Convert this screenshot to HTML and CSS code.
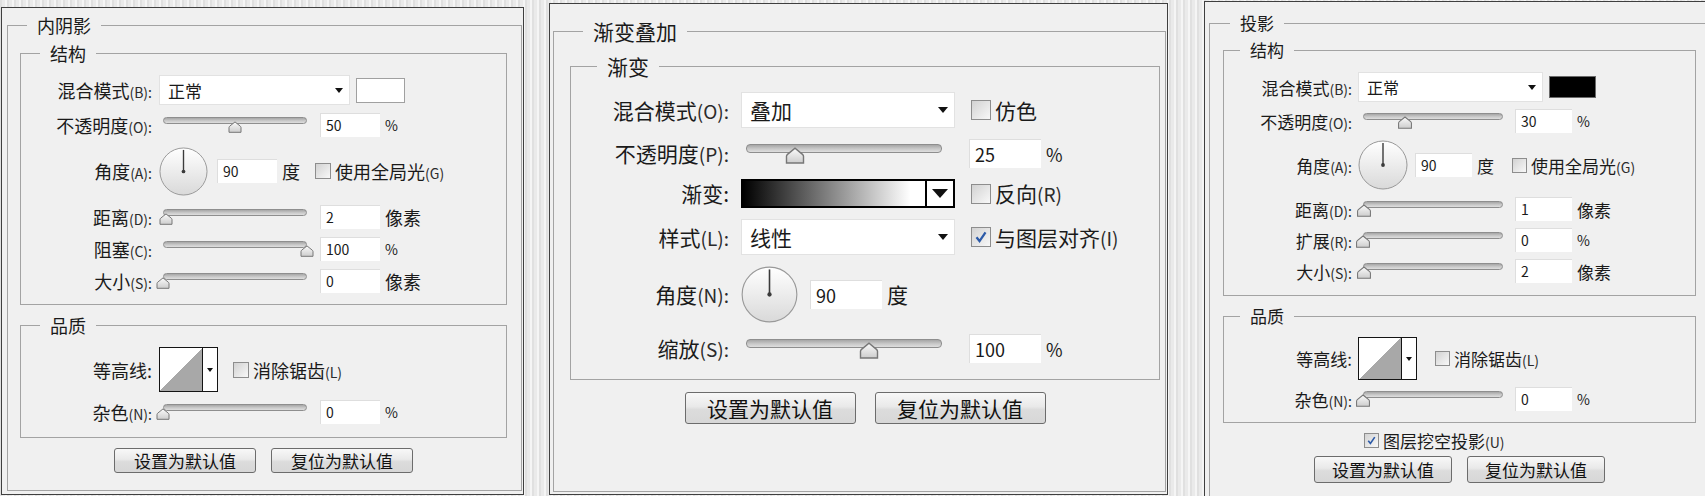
FILE: index.html
```html
<!DOCTYPE html>
<html lang="zh-CN">

<head>
    <meta charset="UTF-8">
    <title>图层样式</title>
    <link rel="stylesheet" href="styles.css">
</head>

<body>
    <!-- shared shapes -->
    <svg class="defs" aria-hidden="true">
        <defs>
            <linearGradient id="tg" x1="0" y1="0" x2="0" y2="1">
                <stop offset="0" stop-color="#fbfbfb" />
                <stop offset="1" stop-color="#cdcdcd" />
            </linearGradient>
            <linearGradient id="dg" x1="0" y1="0" x2="0" y2="1">
                <stop offset="0" stop-color="#ffffff" />
                <stop offset="1" stop-color="#d9d9d9" />
            </linearGradient>
            <symbol id="thumb" viewBox="0 0 14 12">
                <path d="M1 11.3V6.6Q1 5.8 1.7 5.2L7 .9l5.3 4.3q.7.6.7 1.4v4.7z" fill="url(#tg)" stroke="#777" />
            </symbol>
            <symbol id="dial" viewBox="0 0 50 50">
                <circle cx="25" cy="25" r="24" fill="url(#dg)" stroke="#999" />
                <path d="M25 25V3" stroke="#3b3b3b" stroke-width="1.4" />
                <circle cx="25" cy="25" r="1.9" fill="#3b3b3b" />
            </symbol>
            <symbol id="tick" viewBox="0 0 16 16">
                <path d="M4 8.2l2.7 3.4L12 3.8" fill="none" stroke="#2c5aa8" stroke-width="2" />
            </symbol>
        </defs>
    </svg>

    <!-- 内阴影 -->
    <div class="panel p1">
        <fieldset class="box outer">
            <legend>内阴影</legend>
            <fieldset class="box sub s1">
                <legend>结构</legend>
                <div class="row">
                    <span class="lbl">混合模式<span class="k">(B):</span></span>
                    <div class="select"><span>正常</span><i class="arrow"></i></div>
                    <span class="swatch"></span>
                </div>
                <div class="row">
                    <span class="lbl">不透明度<span class="k">(O):</span></span>
                    <div class="slider"><div class="track"></div><svg class="thumb" style="left:50%"><use href="#thumb" /></svg></div>
                    <span class="num">50</span><span class="unit">%</span>
                </div>
                <div class="row ang">
                    <span class="lbl">角度<span class="k">(A):</span></span>
                    <svg class="dial"><use href="#dial" /></svg>
                    <span class="num anum">90</span><span class="unit cj">度</span>
                    <span class="cb"></span><span class="cbl">使用全局光<span class="k">(G)</span></span>
                </div>
                <div class="row">
                    <span class="lbl">距离<span class="k">(D):</span></span>
                    <div class="slider"><div class="track"></div><svg class="thumb" style="left:2%"><use href="#thumb" /></svg></div>
                    <span class="num">2</span><span class="unit cj">像素</span>
                </div>
                <div class="row">
                    <span class="lbl">阻塞<span class="k">(C):</span></span>
                    <div class="slider"><div class="track"></div><svg class="thumb" style="left:100%"><use href="#thumb" /></svg></div>
                    <span class="num">100</span><span class="unit">%</span>
                </div>
                <div class="row">
                    <span class="lbl">大小<span class="k">(S):</span></span>
                    <div class="slider"><div class="track"></div><svg class="thumb" style="left:0%"><use href="#thumb" /></svg></div>
                    <span class="num">0</span><span class="unit cj">像素</span>
                </div>
            </fieldset>
            <fieldset class="box sub s2">
                <legend>品质</legend>
                <div class="row">
                    <span class="lbl">等高线:</span>
                    <div class="contour"><div class="curve"></div><div class="cdd"><i class="arrow"></i></div></div>
                    <span class="cb"></span><span class="cbl">消除锯齿<span class="k">(L)</span></span>
                </div>
                <div class="row">
                    <span class="lbl">杂色<span class="k">(N):</span></span>
                    <div class="slider"><div class="track"></div><svg class="thumb" style="left:0%"><use href="#thumb" /></svg></div>
                    <span class="num">0</span><span class="unit">%</span>
                </div>
            </fieldset>
            <div class="btns">
                <button class="btn">设置为默认值</button>
                <button class="btn">复位为默认值</button>
            </div>
        </fieldset>
    </div>

    <!-- 渐变叠加 -->
    <div class="panel p2">
        <fieldset class="box outer">
            <legend>渐变叠加</legend>
            <fieldset class="box sub s1">
                <legend>渐变</legend>
                <div class="row">
                    <span class="lbl">混合模式<span class="k">(O):</span></span>
                    <div class="select"><span>叠加</span><i class="arrow"></i></div>
                    <span class="cb"></span><span class="cbl">仿色</span>
                </div>
                <div class="row">
                    <span class="lbl">不透明度<span class="k">(P):</span></span>
                    <div class="slider"><div class="track"></div><svg class="thumb" style="left:25%"><use href="#thumb" /></svg></div>
                    <span class="num">25</span><span class="unit">%</span>
                </div>
                <div class="row">
                    <span class="lbl">渐变:</span>
                    <div class="grad"><div class="ramp"></div><div class="gdd"><i class="arrow"></i></div></div>
                    <span class="cb"></span><span class="cbl">反向<span class="k">(R)</span></span>
                </div>
                <div class="row">
                    <span class="lbl">样式<span class="k">(L):</span></span>
                    <div class="select"><span>线性</span><i class="arrow"></i></div>
                    <span class="cb"><svg><use href="#tick" /></svg></span><span class="cbl">与图层对齐<span class="k">(I)</span></span>
                </div>
                <div class="row ang">
                    <span class="lbl">角度<span class="k">(N):</span></span>
                    <svg class="dial"><use href="#dial" /></svg>
                    <span class="num anum">90</span><span class="unit cj">度</span>
                </div>
                <div class="row">
                    <span class="lbl">缩放<span class="k">(S):</span></span>
                    <div class="slider"><div class="track"></div><svg class="thumb" style="left:63%"><use href="#thumb" /></svg></div>
                    <span class="num">100</span><span class="unit">%</span>
                </div>
            </fieldset>
            <div class="btns">
                <button class="btn">设置为默认值</button>
                <button class="btn">复位为默认值</button>
            </div>
        </fieldset>
    </div>

    <!-- 投影 -->
    <div class="panel p3">
        <fieldset class="box outer">
            <legend>投影</legend>
            <fieldset class="box sub s1">
                <legend>结构</legend>
                <div class="row">
                    <span class="lbl">混合模式<span class="k">(B):</span></span>
                    <div class="select"><span>正常</span><i class="arrow"></i></div>
                    <span class="swatch black"></span>
                </div>
                <div class="row">
                    <span class="lbl">不透明度<span class="k">(O):</span></span>
                    <div class="slider"><div class="track"></div><svg class="thumb" style="left:30%"><use href="#thumb" /></svg></div>
                    <span class="num">30</span><span class="unit">%</span>
                </div>
                <div class="row ang">
                    <span class="lbl">角度<span class="k">(A):</span></span>
                    <svg class="dial"><use href="#dial" /></svg>
                    <span class="num anum">90</span><span class="unit cj">度</span>
                    <span class="cb"></span><span class="cbl">使用全局光<span class="k">(G)</span></span>
                </div>
                <div class="row">
                    <span class="lbl">距离<span class="k">(D):</span></span>
                    <div class="slider"><div class="track"></div><svg class="thumb" style="left:1%"><use href="#thumb" /></svg></div>
                    <span class="num">1</span><span class="unit cj">像素</span>
                </div>
                <div class="row">
                    <span class="lbl">扩展<span class="k">(R):</span></span>
                    <div class="slider"><div class="track"></div><svg class="thumb" style="left:0%"><use href="#thumb" /></svg></div>
                    <span class="num">0</span><span class="unit">%</span>
                </div>
                <div class="row">
                    <span class="lbl">大小<span class="k">(S):</span></span>
                    <div class="slider"><div class="track"></div><svg class="thumb" style="left:1%"><use href="#thumb" /></svg></div>
                    <span class="num">2</span><span class="unit cj">像素</span>
                </div>
            </fieldset>
            <fieldset class="box sub s2">
                <legend>品质</legend>
                <div class="row">
                    <span class="lbl">等高线:</span>
                    <div class="contour"><div class="curve"></div><div class="cdd"><i class="arrow"></i></div></div>
                    <span class="cb"></span><span class="cbl">消除锯齿<span class="k">(L)</span></span>
                </div>
                <div class="row">
                    <span class="lbl">杂色<span class="k">(N):</span></span>
                    <div class="slider"><div class="track"></div><svg class="thumb" style="left:0%"><use href="#thumb" /></svg></div>
                    <span class="num">0</span><span class="unit">%</span>
                </div>
            </fieldset>
            <div class="row knock">
                <span class="cb"><svg><use href="#tick" /></svg></span><span class="cbl">图层挖空投影<span class="k">(U)</span></span>
            </div>
            <div class="btns">
                <button class="btn">设置为默认值</button>
                <button class="btn">复位为默认值</button>
            </div>
        </fieldset>
    </div>
</body>

</html>
```

FILE: styles.css
```css
* {
    box-sizing: border-box;
}

html,
body {
    height: 100%;
}

body {
    margin: 0;
    overflow: hidden;
    display: flex;
    align-items: flex-start;
    font-family: "Noto Sans CJK SC", "Noto Sans", sans-serif;
    color: #1a1a1a;
    background: repeating-linear-gradient(90deg, #e0e0e0 0 2px, #eaeaea 2px 5px, #f5f5f5 5px 7px);
}

.defs {
    position: absolute;
    width: 0;
    height: 0;
}

/* panels */

.panel {
    flex-shrink: 0;
    display: flex;
    flex-direction: column;
    background: #f0f0f0;
    border: 1px solid #3f3f3f;
    font-size: var(--fs);
    line-height: 1;
}

.p1 {
    width: 523px;
    height: 488px;
    margin: 7px 0 0 1px;
    --fs: 18px;
    --ks: 14px;
    --lh: 20px;
    --lw: 131px;
    --gap: 7px;
    --sw: 191px;
    --sh: 30px;
    --sfs: 17px;
    --tml: 11px;
    --tw: 144px;
    --th: 7px;
    --thw: 15px;
    --thh: 12px;
    --tht: 4px;
    --nml: 13px;
    --nw: 60px;
    --nh: 24px;
    --nfs: 14px;
    --uml: 5px;
    --dial: 49px;
    --angh: 52px;
    --anml: 9px;
    --cbs: 16px;
    --cbml: 15px;
    --rg: 8px;
    --cw: 59px;
    --ch: 45px;
    --bw: 142px;
    --bh: 25px;
    --bfs: 17px;
    --bgap: 15px;
}

.p2 {
    width: 619px;
    height: 492px;
    margin: 3px 0 0 25px;
    --fs: 21px;
    --ks: 19px;
    --lh: 24px;
    --lw: 158px;
    --gap: 12px;
    --sw: 214px;
    --sh: 36px;
    --sfs: 21px;
    --tml: 17px;
    --tw: 196px;
    --th: 9px;
    --thw: 20px;
    --thh: 17px;
    --tht: 3px;
    --nml: 27px;
    --nw: 72px;
    --nh: 29px;
    --nfs: 18px;
    --uml: 5px;
    --dial: 57px;
    --angh: 57px;
    --anml: 12px;
    --cbs: 20px;
    --cbml: 16px;
    --rg: 11px;
    --bw: 171px;
    --bh: 32px;
    --bfs: 21px;
    --bgap: 19px;
}

.p3 {
    width: 520px;
    height: 520px;
    margin: 1px 0 0 36px;
    --fs: 17px;
    --ks: 14px;
    --lh: 20px;
    --lw: 128px;
    --gap: 6px;
    --sw: 185px;
    --sh: 30px;
    --sfs: 16px;
    --tml: 11px;
    --tw: 140px;
    --th: 7px;
    --thw: 15px;
    --thh: 13px;
    --tht: 3px;
    --nml: 12px;
    --nw: 57px;
    --nh: 24px;
    --nfs: 14px;
    --uml: 5px;
    --dial: 50px;
    --angh: 50px;
    --anml: 7px;
    --cbs: 15px;
    --cbml: 18px;
    --rg: 7px;
    --cw: 59px;
    --ch: 43px;
    --bw: 138px;
    --bh: 27px;
    --bfs: 17px;
    --bgap: 15px;
}

/* group boxes */

.box {
    margin: 0;
    padding: 0;
    min-width: 0;
    border: 1px solid #a3a3a3;
}

.box > legend {
    padding: 0 10px;
    font-size: var(--fs);
    line-height: var(--lh);
}

.outer {
    flex: 1;
    display: flex;
    flex-direction: column;
}

.sub {
    display: flex;
    flex-direction: column;
    gap: var(--rg);
}

.p1 .outer {
    margin: 7px 1px 3px 5px;
}

.p1 .outer > legend {
    margin-left: 19px;
}

.p1 .sub > legend {
    margin-left: 19px;
}

.p1 .s1 {
    margin: 8px 14px 0 12px;
    padding: 12px 0 11px;
}

.p1 .s2 {
    margin: 10px 14px 0 12px;
    padding: 12px 0 13px;
}

.p1 .btns {
    margin: 10px 14px 0 12px;
}

.p2 .outer {
    margin: 15px 1px 2px 3px;
}

.p2 .outer > legend {
    margin-left: 29px;
}

.p2 .sub > legend {
    margin-left: 26px;
}

.p2 .s1 {
    margin: 11px 5px 0 16px;
    padding: 14px 0 16px;
}

.p2 .btns {
    margin: 12px 5px 0 16px;
}

.p3 .outer {
    margin: 11px 0 0 4px;
}

.p3 .outer > legend {
    margin-left: 20px;
}

.p3 .sub {
    width: 473px;
    margin-left: 13px;
}

.p3 .sub > legend {
    margin-left: 16px;
}

.p3 .s1 {
    margin-top: 7px;
    padding: 12px 0;
}

.p3 .s2 {
    margin-top: 10px;
    padding: 11px 0;
}

.p3 .knock {
    min-height: 18px;
    margin: 8px 0 0 154px;
}

.p3 .knock .cb {
    margin-left: 0;
}

.p3 .btns {
    width: 473px;
    margin: 7px 0 0 13px;
}

/* rows */

.row {
    display: flex;
    align-items: center;
    min-height: var(--nh);
    white-space: nowrap;
}

.row.ang {
    min-height: var(--angh);
}

.lbl {
    flex-shrink: 0;
    width: var(--lw);
    text-align: right;
}

.k {
    font-size: var(--ks);
    color: #2b2b2b;
}

.select {
    display: flex;
    align-items: center;
    flex-shrink: 0;
    width: var(--sw);
    height: var(--sh);
    margin-left: var(--gap);
    padding: 0 7px 0 9px;
    background: #fff;
    box-shadow: inset 0 0 0 1px #e2e2e2;
    font-size: var(--sfs);
}

.arrow {
    margin-left: auto;
    border-left: 4px solid transparent;
    border-right: 4px solid transparent;
    border-top: 5px solid #111;
}

.p2 .arrow {
    border-width: 6px 5px 0;
}

.swatch {
    width: 49px;
    height: 25px;
    margin-left: 6px;
    border: 1px solid #a0a0a0;
    background: #fff;
}

.swatch.black {
    width: 47px;
    height: 22px;
    border-color: #6a6a6a;
    background: #000;
}

.slider {
    position: relative;
    flex-shrink: 0;
    width: var(--tw);
    height: calc(var(--tht) + var(--thh));
    margin-left: var(--tml);
}

.track {
    height: var(--th);
    border: 1px solid #8e8e8e;
    border-radius: 4px;
    background: linear-gradient(#a6a6a6, #c9c9c9 55%, #dedede);
}

.thumb {
    position: absolute;
    top: var(--tht);
    width: var(--thw);
    height: var(--thh);
    transform: translateX(-50%);
}

.num {
    display: flex;
    align-items: center;
    flex-shrink: 0;
    width: var(--nw);
    height: var(--nh);
    margin-left: var(--nml);
    padding-left: 6px;
    background: #fff;
    box-shadow: inset 1px 1px 0 #dedede;
    font-size: var(--nfs);
}

.num.anum {
    margin-left: var(--anml);
}

.unit {
    margin-left: var(--uml);
    font-size: var(--nfs);
}

.unit.cj {
    font-size: var(--fs);
}

.dial {
    flex-shrink: 0;
    width: var(--dial);
    height: var(--dial);
    margin-left: var(--gap);
}

.cb {
    display: inline-flex;
    flex-shrink: 0;
    width: var(--cbs);
    height: var(--cbs);
    margin-left: var(--cbml);
    border: 1px solid #8d8d8d;
    background: linear-gradient(135deg, #d2d2d2, #f8f8f8);
}

.cb svg {
    width: 100%;
    height: 100%;
}

.cbl {
    margin-left: 4px;
}

.contour {
    display: flex;
    flex-shrink: 0;
    width: var(--cw);
    height: var(--ch);
    margin-left: var(--gap);
    border: 1px solid #141414;
    background: #fff;
}

.curve {
    flex: 1;
    background: linear-gradient(to top left, #a8a8a8 50%, #fff 50%);
}

.cdd {
    display: flex;
    align-items: center;
    justify-content: center;
    width: 15px;
    border-left: 1px solid #141414;
}

.cdd .arrow {
    margin: 0;
    border-width: 4px 3px 0;
}

.grad {
    display: flex;
    flex-shrink: 0;
    width: var(--sw);
    height: 29px;
    margin-left: var(--gap);
    border: 2px solid #000;
}

.ramp {
    flex: 1;
    background: linear-gradient(90deg, #000, #fff 92%);
}

.gdd {
    display: flex;
    align-items: center;
    justify-content: center;
    width: 28px;
    border-left: 2px solid #000;
    background: #fff;
}

.gdd .arrow {
    margin: 0;
    border-width: 9px 8px 0;
}

/* buttons */

.btns {
    display: flex;
    justify-content: center;
    gap: var(--bgap);
}

.btn {
    width: var(--bw);
    height: var(--bh);
    padding: 0;
    font: inherit;
    font-size: var(--bfs);
    color: #111;
    border: 1px solid #6c6c6c;
    border-radius: 3px;
    background: linear-gradient(#f8f8f8, #e9e9e9 45%, #dcdcdc 55%, #d7d7d7);
}
```
